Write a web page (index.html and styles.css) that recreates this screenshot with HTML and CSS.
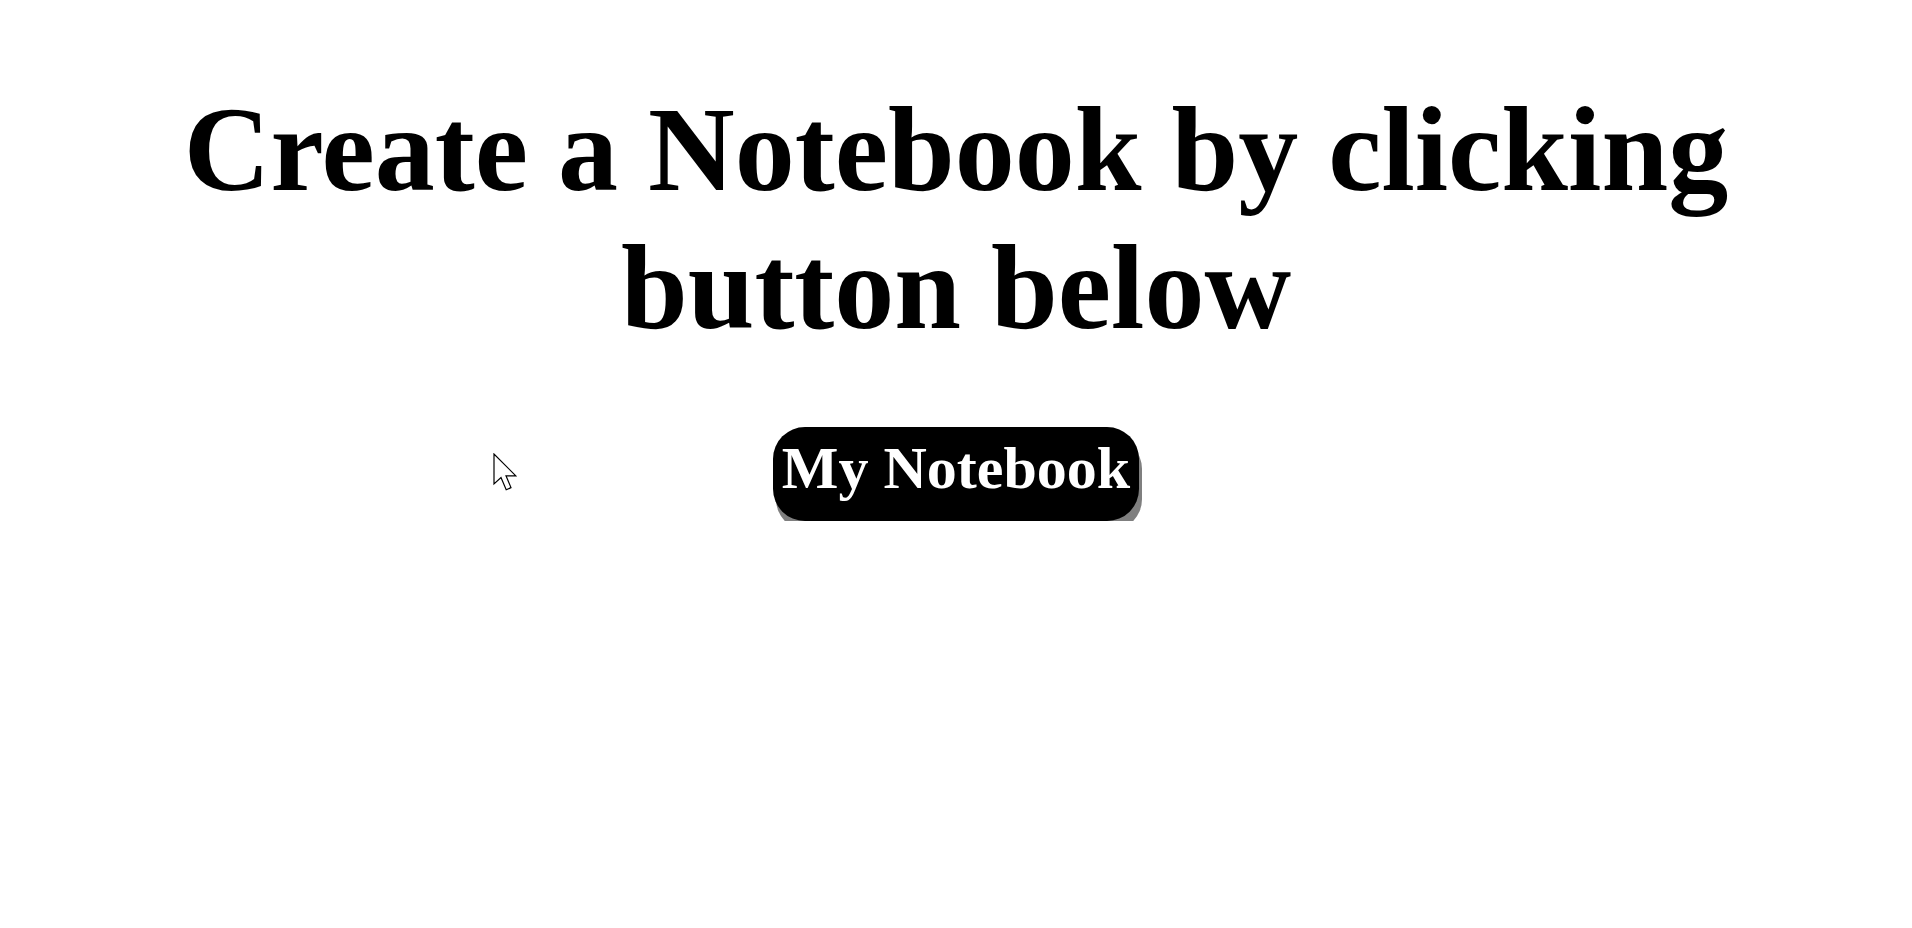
FILE: index.html
```html
<!DOCTYPE html>
<html lang="en">
<head>
<meta charset="utf-8">
<title>Notebook</title>
<link rel="stylesheet" href="styles.css">
</head>
<body>
<main class="page">
  <h1 class="title">Create a Notebook by clicking button below</h1>
  <button class="notebook-btn" type="button">My Notebook</button>
</main>
<svg class="cursor" width="27" height="40" viewBox="0 0 13.5 20" aria-hidden="true">
  <path d="M0.5 0.5 L0.5 15.5 L4 12.3 L6.6 18.4 L9 17.3 L6.5 11.4 L11.4 11.4 Z" fill="#fff" stroke="#000" stroke-width="0.6" stroke-linejoin="miter"/>
</svg>
</body>
</html>
```

FILE: styles.css
```css
html, body {
  background: #ffffff;
}
body {
  margin: 8px;
  font-family: "Liberation Serif", "Times New Roman", serif;
  color: #000;
}
.page {
  display: flex;
  flex-direction: column;
  align-items: center;
}
.title {
  font-size: 120px;
  font-weight: bold;
  text-align: center;
  margin: 73px 0 70px;
  line-height: 138px;
}
.notebook-btn {
  -webkit-appearance: none;
  appearance: none;
  box-sizing: border-box;
  height: 94px;
  font-family: "Liberation Serif", "Times New Roman", serif;
  font-size: 60px;
  font-weight: bold;
  color: #fff;
  background-color: #000;
  border: 0 solid transparent;
  border-radius: 32px;
  padding: 7px 9px 18px;
  line-height: 69px;
  box-shadow: 3px 10px 0 0 #7f7f7f;
  cursor: pointer;
}
.cursor {
  position: absolute;
  left: 493px;
  top: 453px;
}
```
